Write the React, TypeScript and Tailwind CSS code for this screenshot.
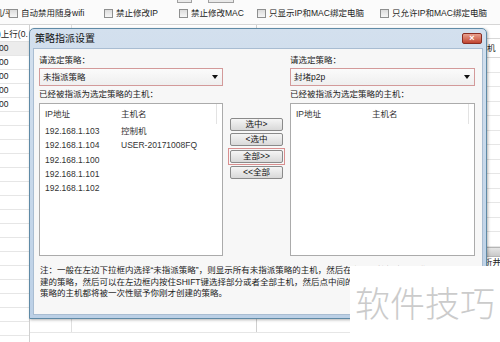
import React from "react";

const leftHosts = [
  ["192.168.1.103", "控制机"],
  ["192.168.1.104", "USER-20171008FQ"],
  ["192.168.1.100", ""],
  ["192.168.1.101", ""],
  ["192.168.1.102", ""],
];

const toolbarItems = [
  { label: "自动禁用随身wifi", w: "w-[95px]" },
  { label: "禁止修改IP", w: "w-[75px]" },
  { label: "禁止修改MAC", w: "w-[78px]" },
  { label: "只显示IP和MAC绑定电脑", w: "w-[123px]" },
  { label: "只允许IP和MAC绑定电脑", w: "w-[120px]" },
];

function CheckBox() {
  return (
    <span className="w-[9px] h-[9px] border border-[#8e8f8f] bg-gradient-to-b from-[#dcdcdc] to-[#f6f6f6] shrink-0" />
  );
}

function Dropdown({ value }: { value: string }) {
  return (
    <div className="h-[18px] border border-[#d39a9a] bg-gradient-to-b from-[#fbfbfb] to-[#efefef] flex items-center justify-between pl-[3px] pr-[4px]">
      <span>{value}</span>
      <span className="w-0 h-0 border-l-[3px] border-r-[3px] border-t-[4px] border-l-transparent border-r-transparent border-t-[#111]" />
    </div>
  );
}

function HostList({ hosts, nameX }: { hosts: string[][]; nameX: string }) {
  return (
    <div className="h-[153px] border border-[#ababab] bg-white mt-[3px] text-[#333]">
      <div className="h-[20px] flex items-center relative">
        <span className={`pl-[5px] ${nameX}`}>IP地址</span>
        <span>主机名</span>
        <span className="absolute right-[5px] top-0 h-[20px] w-px bg-[#e3e3e3]" />
      </div>
      <div>
        {hosts.map(([ip, name]) => (
          <div key={ip} className="h-[14.3px] flex items-center">
            <span className={`pl-[5px] ${nameX}`}>{ip}</span>
            <span>{name}</span>
          </div>
        ))}
      </div>
    </div>
  );
}

function Btn({ children }: { children: React.ReactNode }) {
  return (
    <div className="w-[53px] h-[13px] border border-[#8a8a8a] rounded-[2px] bg-gradient-to-b from-[#f5f5f5] to-[#d9d9d9] flex items-center justify-center text-[#111] leading-none">
      {children}
    </div>
  );
}

export default function App() {
  const bgRows = Array.from({ length: 22 });
  return (
    <div className="relative w-[500px] h-[342px] overflow-hidden bg-white text-[8.5px] text-[#222] font-['Liberation_Sans','Noto_Sans_CJK_SC',sans-serif]">
      {/* toolbar */}
      <div className="h-[25px] border-b border-[#d6d6d6] bg-[#fbfbfb] flex flex-col">
        <div className="h-[3px] flex">
          <div className="ml-[177px] w-[15px] h-[3px] border border-t-0 border-[#a0a0a0] bg-[#e9e9e9]" />
          <div className="ml-[16px] w-[26px] h-[3px] border border-t-0 border-[#a0a0a0] bg-[#e9e9e9]" />
        </div>
        <div className="flex-1 flex items-center">
          <div className="w-[47px] overflow-hidden whitespace-nowrap">
            <span className="ml-[-6px] inline-block">机/平板</span>
          </div>
          {toolbarItems.map((it) => (
            <div key={it.label} className={`${it.w} flex items-center gap-[3px] whitespace-nowrap shrink-0`}>
              <CheckBox />
              <span>{it.label}</span>
            </div>
          ))}
        </div>
      </div>

      {/* background tables */}
      <div className="flex">
        <div className="w-[30px] overflow-hidden border-r border-[#d0d0d0]">
          <div className="h-[15px] mt-[2px] flex items-center whitespace-nowrap border-b border-[#e2e2e2]">
            <span className="ml-[-2px]">)上行(0.</span>
          </div>
          {bgRows.map((_, i) => (
            <div
              key={i}
              className={`h-[14px] flex items-center border-b border-[#e6e6e6] ${i === 0 ? "bg-[#ececec]" : ""}`}
            >
              {i < 5 ? <span className="ml-[-1px]">00</span> : null}
            </div>
          ))}
        </div>
        <div className="flex-1">
          {bgRows.map((_, i) => (
            <div key={i} className="h-[14px] flex border-b border-[#e6e6e6]">
              <div className="w-[42px] border-r border-[#e0e0e0]" />
              <div className="w-[185px] border-r border-[#cfcfcf]" />
            </div>
          ))}
        </div>
        <div className="w-[14px] overflow-hidden">
          <div className="mt-[13px] h-[20px] flex items-center border-y border-[#d8d8d8] whitespace-nowrap">
            <span className="ml-[1px]">机</span>
          </div>
          {Array.from({ length: 13 }).map((_, i) => (
            <div key={i} className="h-[14.5px] border-b border-[#e6e6e6]" />
          ))}
          <div className="h-[10px] bg-gradient-to-b from-[#e6e6e6] to-[#c9c9c9] border-y border-[#b5b5b5]" />
          <div className="h-[12px] flex items-center whitespace-nowrap">
            <span className="ml-[-2px]">析井</span>
          </div>
        </div>
      </div>

      {/* dialog window */}
      <div className="absolute left-[29px] top-[28px] w-[458px] h-[291px] border border-[#5f8aa6] rounded-t-[5px] bg-gradient-to-b from-[#d3e0ee] to-[#bcd0e6] flex flex-col shadow-[1px_1px_3px_rgba(0,0,0,0.3)]">
        <div className="h-[19px] flex items-center justify-between pl-[5px]">
          <span className="text-[10px] text-[#111]">策略指派设置</span>
          <div className="self-start mt-[4px] mr-[4px] w-[20px] h-[11px] rounded-[2px] border border-[#8a2d22] bg-gradient-to-b from-[#e8a08e] to-[#c0432f] flex items-center justify-center text-white text-[9px] font-bold leading-none">
            ×
          </div>
        </div>
        <div className="flex-1 mx-[3px] mb-[3px] bg-[#f7f7f7] border border-[#a9bdd2] pl-[5px] pt-[5px] flex flex-col leading-[12px]">
          <div className="flex items-start">
            <div className="w-[184px]">
              <div>请选定策略：</div>
              <div className="mt-[2px]">
                <Dropdown value="未指派策略" />
              </div>
              <div className="mt-[2px]">已经被指派为选定策略的主机：</div>
              <HostList hosts={leftHosts} nameX="w-[81px]" />
            </div>
            <div className="w-[67px] pt-[64px] pl-[7px] flex flex-col">
              <Btn>选中&gt;</Btn>
              <div className="mt-[2px]">
                <Btn>&lt;选中</Btn>
              </div>
              <div className="mt-[2px] ml-[-2px] w-[57px] border border-[#d98f8f] p-px">
                <Btn>全部&gt;&gt;</Btn>
              </div>
              <div className="mt-[1px]">
                <Btn>&lt;&lt;全部</Btn>
              </div>
            </div>
            <div className="w-[185px]">
              <div>请选定策略：</div>
              <div className="mt-[2px]">
                <Dropdown value="封堵p2p" />
              </div>
              <div className="mt-[2px]">已经被指派为选定策略的主机：</div>
              <HostList hosts={[]} nameX="w-[81px]" />
            </div>
          </div>
          <div className="mt-[9px] pl-px whitespace-nowrap overflow-hidden text-[#222] leading-[11.5px]">
            <div>注：一般在左边下拉框内选择“未指派策略”，则显示所有未指派策略的主机，然后在右边下拉框内选择你刚才创</div>
            <div>建的策略，然后可以在左边框内按住SHIFT键选择部分或者全部主机，然后点中间的“选中&gt;”按钮，这样选中</div>
            <div>策略的主机都将被一次性赋予你刚才创建的策略。</div>
          </div>
        </div>
      </div>

      {/* watermark */}
      <div className="absolute left-[350px] top-[266px] w-[150px] h-[76px] bg-white pl-[5px] pt-[18px]">
        <span className="text-[35px] leading-[36px] font-light text-[#cbcbcb] font-['Noto_Sans_CJK_SC',sans-serif] whitespace-nowrap">
          软件技巧
        </span>
      </div>
    </div>
  );
}
